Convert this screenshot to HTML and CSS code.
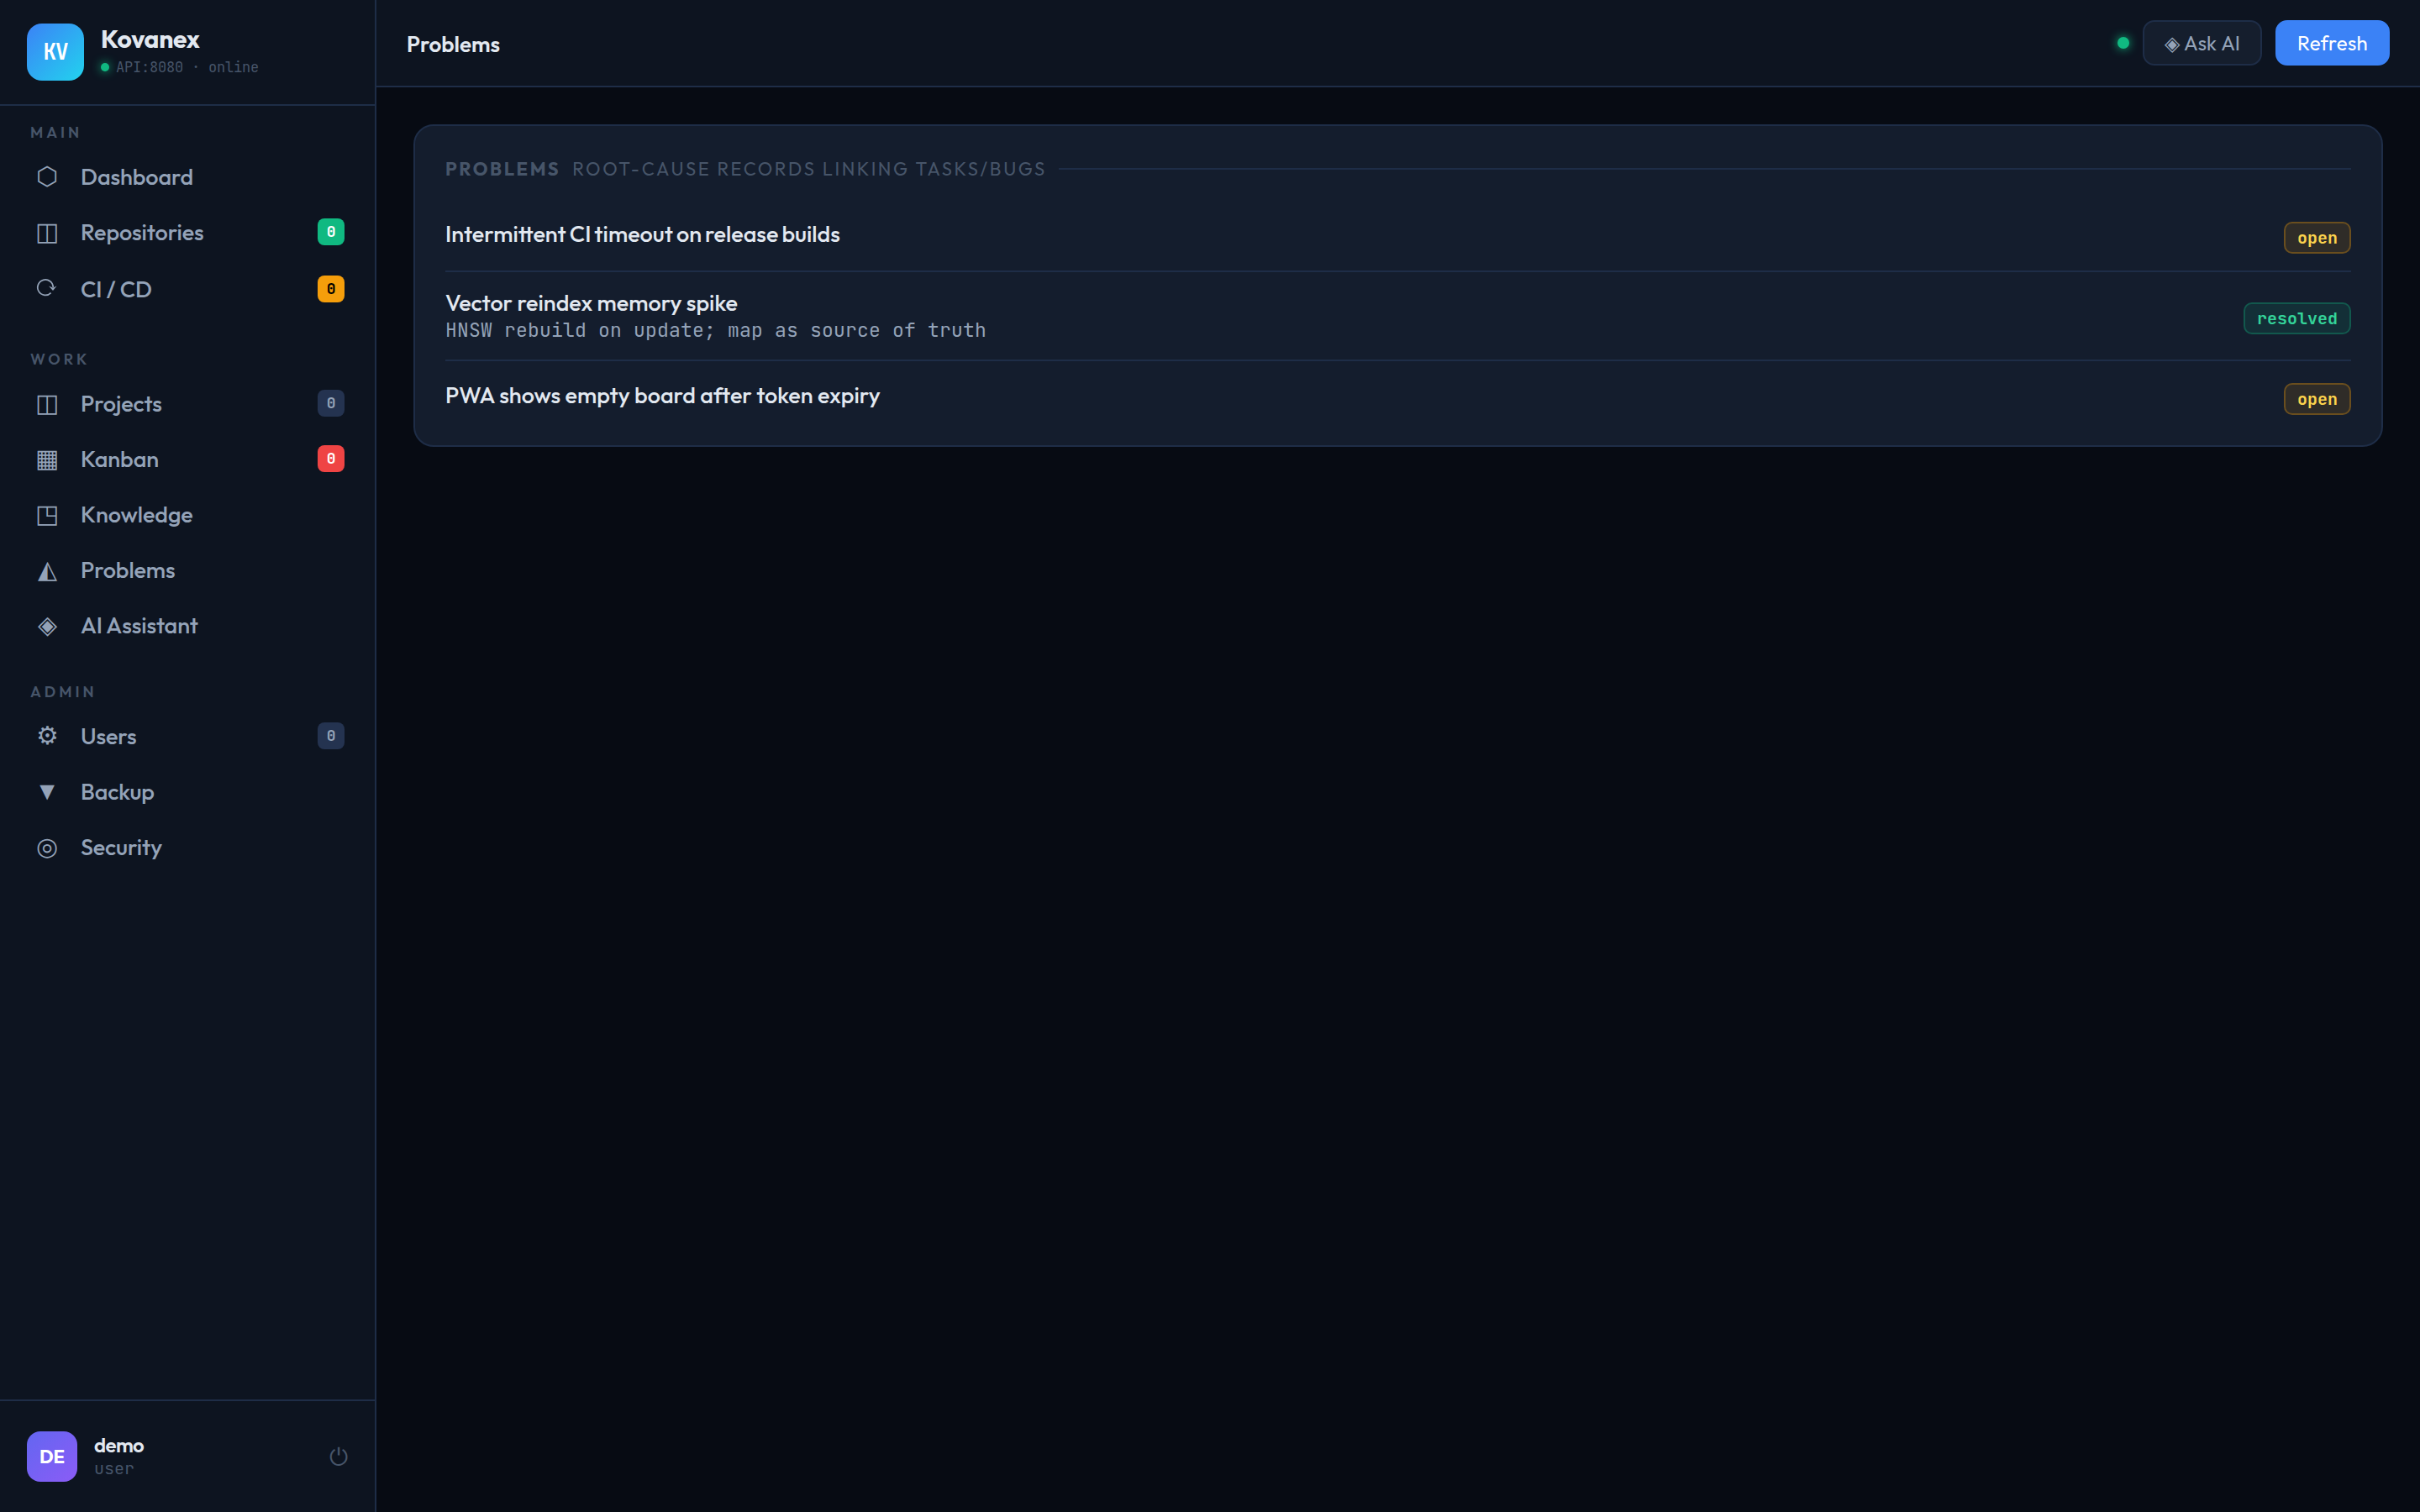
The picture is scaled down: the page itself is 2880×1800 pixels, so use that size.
FILE: index.html
```
<!DOCTYPE html>
<html lang="en">
<head>
    <meta charset="UTF-8">
    <meta name="viewport" content="width=device-width, initial-scale=1.0">
    <title>Kovanex - Problems</title>
    <link rel="stylesheet" href="styles.css">
</head>
<body>
    <div class="app">
        <aside class="sidebar">
            <div class="brand">
                <div class="brand-logo">KV</div>
                <div class="brand-info">
                    <div class="brand-name">Kovanex</div>
                    <div class="brand-status"><span class="dot"></span>API:8080 · online</div>
                </div>
            </div>

            <nav class="nav">
                <div class="nav-label">MAIN</div>
                <a class="nav-item"><span class="nav-icon">⬡</span><span class="nav-text">Dashboard</span></a>
                <a class="nav-item"><span class="nav-icon">◫</span><span class="nav-text">Repositories</span><span class="count green">0</span></a>
                <a class="nav-item tall">
                    <span class="nav-icon">
                        <svg width="28" height="28" viewBox="0 0 28 28">
                            <path d="M18.6 19.6A9.2 9.2 0 1 1 21.2 13" fill="none" stroke="currentColor" stroke-width="1.7"/>
                            <path d="M16 11.5L21 17L25.5 11.5L21 13.5Z" fill="currentColor"/>
                        </svg>
                    </span>
                    <span class="nav-text">CI / CD</span><span class="count amber">0</span>
                </a>

                <div class="nav-label">WORK</div>
                <a class="nav-item"><span class="nav-icon">◫</span><span class="nav-text">Projects</span><span class="count">0</span></a>
                <a class="nav-item"><span class="nav-icon">▦</span><span class="nav-text">Kanban</span><span class="count red">0</span></a>
                <a class="nav-item"><span class="nav-icon">◳</span><span class="nav-text">Knowledge</span></a>
                <a class="nav-item"><span class="nav-icon">◭</span><span class="nav-text">Problems</span></a>
                <a class="nav-item"><span class="nav-icon">◈</span><span class="nav-text">AI Assistant</span></a>

                <div class="nav-label">ADMIN</div>
                <a class="nav-item"><span class="nav-icon">⚙</span><span class="nav-text">Users</span><span class="count">0</span></a>
                <a class="nav-item"><span class="nav-icon">▼</span><span class="nav-text">Backup</span></a>
                <a class="nav-item"><span class="nav-icon">◎</span><span class="nav-text">Security</span></a>
            </nav>

            <div class="user">
                <div class="avatar">DE</div>
                <div class="user-info">
                    <div class="user-name">demo</div>
                    <div class="user-role">user</div>
                </div>
                <span class="logout">⏻</span>
            </div>
        </aside>

        <main class="main">
            <header class="topbar">
                <div class="page-title">Problems</div>
                <span class="dot dot-lg"></span>
                <button class="btn">◈ Ask AI</button>
                <button class="btn btn-primary">Refresh</button>
            </header>

            <section class="card">
                <div class="card-title">PROBLEMS <span class="card-sub">ROOT-CAUSE RECORDS LINKING TASKS/BUGS</span></div>

                <div class="row">
                    <div class="row-body">
                        <div class="row-title tight">Intermittent CI timeout on release builds</div>
                        <div class="row-sub"></div>
                    </div>
                    <span class="badge open">open</span>
                </div>
                <div class="row">
                    <div class="row-body">
                        <div class="row-title">Vector reindex memory spike</div>
                        <div class="row-sub">HNSW rebuild on update; map as source of truth</div>
                    </div>
                    <span class="badge resolved">resolved</span>
                </div>
                <div class="row">
                    <div class="row-body">
                        <div class="row-title">PWA shows empty board after token expiry</div>
                        <div class="row-sub"></div>
                    </div>
                    <span class="badge open">open</span>
                </div>
            </section>
        </main>
    </div>
</body>
</html>
```
FILE: styles.css
```
* {
    box-sizing: border-box;
    margin: 0;
    padding: 0;
}

body {
    background: #070b13;
    color: #e2e8f0;
    font-family: 'Outfit', 'Lato', sans-serif;
    font-size: 26px;
}

.app {
    display: flex;
    height: 100vh;
}

/* Sidebar */
.sidebar {
    width: 448px;
    display: flex;
    flex-direction: column;
    background: #0d1420;
    border-right: 2px solid #1e2d47;
}

.brand {
    display: flex;
    align-items: center;
    gap: 20px;
    height: 126px;
    padding: 0 32px;
    border-bottom: 2px solid #1e2d47;
}

.brand-logo {
    width: 68px;
    height: 68px;
    border-radius: 18px;
    background: linear-gradient(135deg, #3b82f6, #22d3ee);
    color: #fff;
    font: bold 26px/68px 'JetBrains Mono', 'DejaVu Sans Mono', monospace;
    letter-spacing: -1px;
    text-align: center;
}

.brand-name {
    font-size: 30px;
    font-weight: 700;
    letter-spacing: -0.3px;
    line-height: 36px;
}

.brand-status {
    display: flex;
    align-items: center;
    gap: 8px;
    color: #475569;
    font: 17px/32px 'JetBrains Mono', 'DejaVu Sans Mono', monospace;
    letter-spacing: -0.2px;
}

.dot {
    width: 10px;
    height: 10px;
    border-radius: 50%;
    background: #10b981;
    box-shadow: 0 0 12px #10b981;
}

.dot-lg {
    width: 14px;
    height: 14px;
}

.nav {
    flex: 1;
    display: flex;
    flex-direction: column;
    padding: 0 16px;
}

.nav-label {
    margin-top: 34px;
    margin-bottom: 8px;
    padding: 0 20px;
    color: #475569;
    font-size: 18px;
    font-weight: 600;
    letter-spacing: 4px;
    line-height: 24px;
}

.nav-label:first-child {
    margin-top: 20px;
}

.nav-item {
    display: flex;
    align-items: center;
    height: 64px;
    margin-bottom: 2px;
    padding: 0 20px 0 22px;
    border-radius: 16px;
    color: #94a3b8;
    font-size: 27px;
    font-weight: 500;
    letter-spacing: -0.1px;
}

.nav-item.tall {
    height: 68px;
    margin-bottom: 4px;
}

.nav-icon {
    width: 36px;
    margin-right: 22px;
    padding-bottom: 2px;
    font-size: 30px;
    font-weight: 400;
    text-align: center;
}

.nav-icon svg {
    display: block;
    margin: 0 auto;
}

.count {
    width: 32px;
    height: 32px;
    margin-left: auto;
    border-radius: 8px;
    background: #243350;
    font: bold 18px/32px 'JetBrains Mono', 'DejaVu Sans Mono', monospace;
    text-align: center;
}

.count.green {
    background: #10b981;
    color: #fff;
}

.count.amber {
    background: #f59e0b;
    color: #000;
}

.count.red {
    background: #ef4444;
    color: #fff;
}

.user {
    display: flex;
    align-items: center;
    gap: 20px;
    height: 134px;
    padding: 0 32px;
    border-top: 2px solid #1e2d47;
}

.avatar {
    width: 60px;
    height: 60px;
    border-radius: 16px;
    background: linear-gradient(135deg, #6366f1, #8b5cf6);
    color: #fff;
    font-size: 22px;
    font-weight: 700;
    line-height: 60px;
    text-align: center;
}

.user-name {
    font-size: 24px;
    font-weight: 600;
    letter-spacing: -0.6px;
    line-height: 28px;
}

.user-role {
    color: #475569;
    font: 20px/28px 'JetBrains Mono', 'DejaVu Sans Mono', monospace;
}

.logout {
    margin-left: auto;
    color: #475569;
    font-size: 28px;
}

/* Main area */
.main {
    flex: 1;
}

.topbar {
    display: flex;
    align-items: center;
    gap: 16px;
    height: 104px;
    padding: 0 36px;
    background: #0d1420;
    border-bottom: 2px solid #1e2d47;
}

.page-title {
    flex: 1;
    padding-top: 2px;
    font-weight: 600;
}

.btn {
    height: 54px;
    padding: 0 24px;
    border: 2px solid #1e2d47;
    border-radius: 14px;
    background: #151e2d;
    color: #94a3b8;
    font: 400 24px/50px 'Outfit', 'Lato', sans-serif;
    word-spacing: 1px;
}

.btn-primary {
    border-color: #3b82f6;
    background: #3b82f6;
    color: #fff;
    letter-spacing: 0.35px;
}

.card {
    margin: 44px;
    padding: 37px 36px 16px;
    border: 2px solid #1e2d47;
    border-radius: 24px;
    background: #141d2d;
}

.card-title {
    display: flex;
    align-items: center;
    gap: 14px;
    margin-bottom: 23px;
    color: #475569;
    font-size: 22px;
    font-weight: 700;
    letter-spacing: 2.56px;
    line-height: 28px;
}

.card-title::after {
    content: '';
    flex: 1;
    height: 2px;
    background: #1e2d47;
}

.card-sub {
    font-weight: 400;
}

.row {
    display: flex;
    align-items: center;
    min-height: 86px;
    padding: 22px 0 16px;
    border-bottom: 2px solid #1e2d47;
}

.row:last-child {
    min-height: 84px;
    border-bottom: none;
}

.row-body {
    flex: 1;
}

.row-title {
    font-size: 27px;
    font-weight: 500;
    line-height: 28px;
}

.row-title.tight {
    word-spacing: -1.4px;
}

.row-sub {
    min-height: 10px;
    color: #94a3b8;
    font: 23px/38px 'JetBrains Mono', 'DejaVu Sans Mono', monospace;
    letter-spacing: 0.2px;
}

.badge {
    height: 38px;
    padding: 0 14px;
    border: 2px solid;
    border-radius: 10px;
    font: bold 20px/34px 'JetBrains Mono', 'DejaVu Sans Mono', monospace;
}

.badge.open {
    border-color: rgba(245, 158, 11, 0.3);
    background: rgba(245, 158, 11, 0.12);
    color: #fcd34d;
}

.badge.resolved {
    border-color: rgba(16, 185, 129, 0.3);
    background: rgba(16, 185, 129, 0.12);
    color: #34d399;
}
```
